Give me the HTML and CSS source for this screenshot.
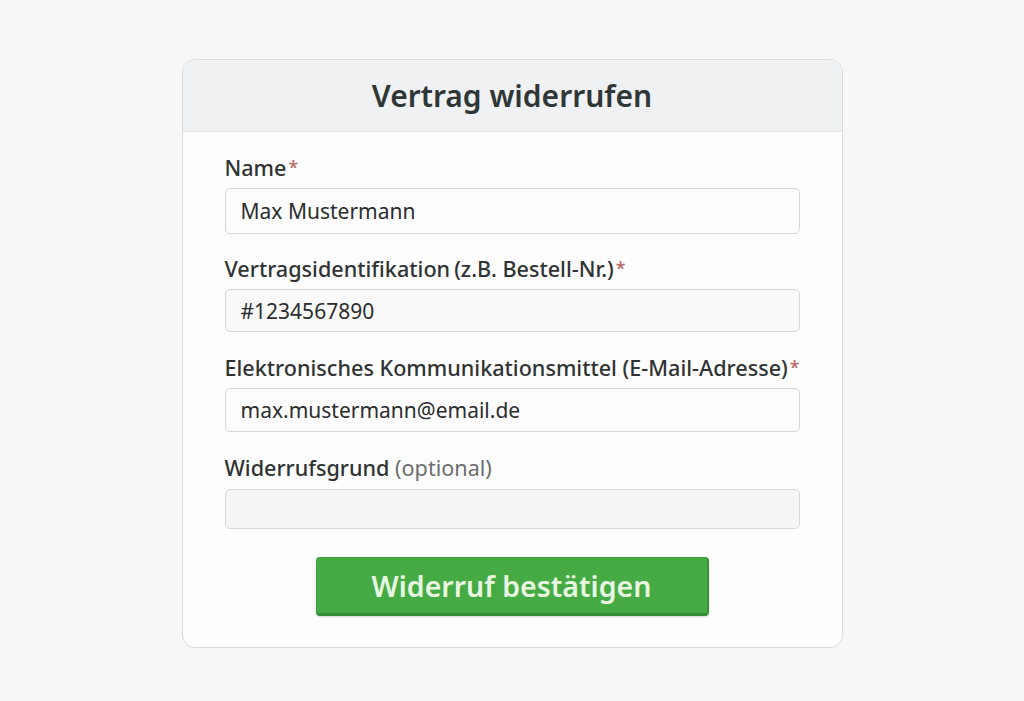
FILE: index.html
```html
<!DOCTYPE html>
<html lang="de">
<head>
<meta charset="utf-8">
<title>Vertrag widerrufen</title>
<link rel="stylesheet" href="styles.css">
</head>
<body>
<div class="page">
  <form class="card">
    <div class="card-header">
      <h1 class="title">Vertrag widerrufen</h1>
    </div>
    <div class="card-body">
      <div class="field field-1">
        <label class="label">Name<span class="req">*</span></label>
        <div class="input input-a">Max Mustermann</div>
      </div>
      <div class="field field-2">
        <label class="label">Vertragsidentifikation<span class="hint-dark">(z.B. Bestell-Nr.)</span><span class="req">*</span></label>
        <div class="input input-b">#1234567890</div>
      </div>
      <div class="field field-3">
        <label class="label">Elektronisches Kommunikationsmittel (E-Mail-Adresse)<span class="req">*</span></label>
        <div class="input input-c">max.mustermann@email.de</div>
      </div>
      <div class="field field-4">
        <label class="label">Widerrufsgrund <span class="hint">(optional)</span></label>
        <div class="input input-d"></div>
      </div>
      <div class="actions">
        <button type="button" class="btn">Widerruf bestätigen</button>
      </div>
    </div>
  </form>
</div>
</body>
</html>
```
FILE: styles.css
```css
* { box-sizing: border-box; }
html, body { margin: 0; padding: 0; }
body {
  background: #f7f7f7;
  font-family: "Noto Sans", "Open Sans", sans-serif;
  color: #2d3030;
}
.page {
  display: flex;
  justify-content: center;
  padding-top: 59px;
}
.card {
  width: 661px;
  background: #fdfdfd;
  border: 1px solid #d9dadb;
  border-radius: 13px;
  overflow: hidden;
}
.card-header {
  height: 72px;
  background: #eff1f2;
  border-bottom: 1px solid #e2e4e5;
  display: flex;
  align-items: center;
  justify-content: center;
}
.title {
  margin: 0;
  font-size: 30px;
  font-weight: 600;
  color: #2f3636;
}
.card-body {
  padding: 23px 42px 31px 42px;
  display: flex;
  flex-direction: column;
}
.field {
  display: flex;
  flex-direction: column;
  gap: 9px;
}
.field-1 { margin-bottom: 22px; }
.field-2 { margin-bottom: 23px; }
.field-3 { margin-bottom: 24px; }
.field-4 { margin-bottom: 28px; }
.label {
  display: block;
  height: 24px;
  line-height: 24px;
  font-size: 21.6px;
  font-weight: 500;
  color: #303333;
  white-space: nowrap;
}
.req {
  color: #b86464;
  font-size: 0.82em;
  margin-left: 2px;
  vertical-align: 2px;
}
.hint { font-weight: 400; color: #6b6e6e; }
.hint-dark { font-weight: 500; margin-left: 4px; }
.input {
  border: 1px solid #d5d7d8;
  border-radius: 5px;
  background: #fdfdfd;
  padding: 0 15px;
  display: flex;
  align-items: center;
  font-size: 21px;
  color: #2b2d2d;
}
.input-a { height: 46px; }
.input-b { height: 43px; background: #f9f9f9; }
.input-c { height: 44px; }
.input-d { height: 40px; background: #f4f5f5; }
.actions {
  display: flex;
  justify-content: center;
}
.btn {
  width: 393px;
  height: 59px;
  border: 1px solid #3e9d3e;
  border-right: 2px solid #3a9239;
  border-bottom: 3px solid #378c36;
  border-radius: 4px;
  background: #46ab45;
  color: #e9f7e2;
  font-family: "Noto Sans", "Open Sans", sans-serif;
  font-size: 28.5px;
  font-weight: 600;
  cursor: pointer;
  box-shadow: 0 1px 2px rgba(0,0,0,0.15);
}
```
